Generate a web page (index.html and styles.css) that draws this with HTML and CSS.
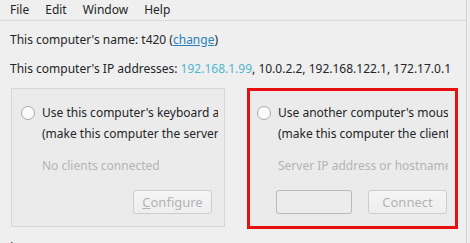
FILE: index.html
```html
<!DOCTYPE html>
<html>
<head>
<meta charset="utf-8">
<link rel="stylesheet" href="styles.css">
</head>
<body>
<div class="window">
  <div class="menubar">
    <span class="menu-item">File</span>
    <span class="menu-item">Edit</span>
    <span class="menu-item">Window</span>
    <span class="menu-item">Help</span>
  </div>
  <div class="content">
    <div class="info-line">This computer's name: t420 (<span class="link">change</span>)</div>
    <div class="info-line">This computer's IP addresses: <span class="ip-main">192.168.1.99</span>, 10.0.2.2, 192.168.122.1, 172.17.0.1</div>
    <div class="groups">
      <div class="group group-server">
        <div class="option">
          <span class="radio"></span>
          <div class="label">Use this computer's keyboard and mouse<br>(make this computer the server)</div>
        </div>
        <div class="status">No clients connected</div>
        <div class="button-row button-row-server">
          <span class="button"><u>C</u>onfigure</span>
        </div>
      </div>
      <div class="group group-client">
        <div class="option">
          <span class="radio"></span>
          <div class="label">Use another computer's mouse and keyboard<br>(make this computer the client)</div>
        </div>
        <div class="status">Server IP address or hostname</div>
        <div class="button-row button-row-client">
          <span class="input"></span>
          <span class="button">Connect</span>
        </div>
      </div>
    </div>
    <div class="log-label">Log</div>
  </div>
</div>
</body>
</html>
```

FILE: styles.css
```css
html, body {
  margin: 0;
  padding: 0;
  background: #efefef;
}

body {
  font-family: "Noto Sans", "Open Sans", sans-serif;
  font-size: 12px;
  color: #232627;
  overflow: hidden;
}

.window {
  width: 466px;
  height: 243px;
  border-right: 1px solid #d2d2d2;
  overflow: hidden;
}

.menubar {
  height: 20px;
  border-bottom: 1px solid #dadada;
  display: flex;
  align-items: center;
  padding-left: 10px;
}

.menu-item {
  margin-right: 16px;
  line-height: 20px;
}

.content {
  padding-left: 10px;
}

.info-line {
  margin-top: 9px;
  line-height: 20px;
  white-space: nowrap;
}

.link {
  color: #2980b9;
  text-decoration: underline;
}

.ip-main {
  color: #4fb6cf;
}

.groups {
  display: flex;
  margin-top: 9px;
  margin-left: 1px;
  gap: 22px;
}

.group {
  display: flex;
  flex-direction: column;
  background: #ebebeb;
  box-sizing: border-box;
}

.group-server {
  width: 214px;
  height: 139px;
  border: 1px solid #d6d6d6;
  padding: 13px 6px 0 9px;
}

.group-client {
  width: 211px;
  height: 141px;
  border: 3px solid #e8100e;
  padding: 11px 7px 0 7px;
}

.option {
  display: flex;
  align-items: flex-start;
}

.radio {
  flex: none;
  width: 12px;
  height: 12px;
  margin-top: 4px;
  margin-right: 7px;
  border: 1px solid #a9a9a9;
  border-radius: 50%;
  background: #fbfbfb;
}

.label {
  line-height: 21px;
  white-space: nowrap;
  overflow: hidden;
  flex: 1;
  min-width: 0;
}

.status {
  margin-top: 11px;
  margin-left: 21px;
  line-height: 21px;
  color: #b4b4b4;
  white-space: nowrap;
  overflow: hidden;
}

.button-row {
  display: flex;
  justify-content: flex-end;
  align-items: center;
  margin-top: 14px;
  gap: 16px;
}

.button-row-server {
  margin-right: 6px;
}

.button-row-client {
  margin-right: 1px;
}

.button {
  box-sizing: border-box;
  width: 79px;
  height: 24px;
  border: 1px solid #cdcdcd;
  border-radius: 3px;
  background: linear-gradient(#f5f5f5, #eeeeee);
  color: #b3b3b3;
  display: flex;
  align-items: center;
  justify-content: center;
  font-size: 13px;
}

.button u {
  text-decoration: underline;
}

.input {
  box-sizing: border-box;
  width: 76px;
  height: 24px;
  border: 1px solid #b9b9b9;
  border-radius: 3px;
  background: #ececec;
  margin-top: -1px;
}

.log-label {
  margin-top: 10px;
  line-height: 16px;
}
```
